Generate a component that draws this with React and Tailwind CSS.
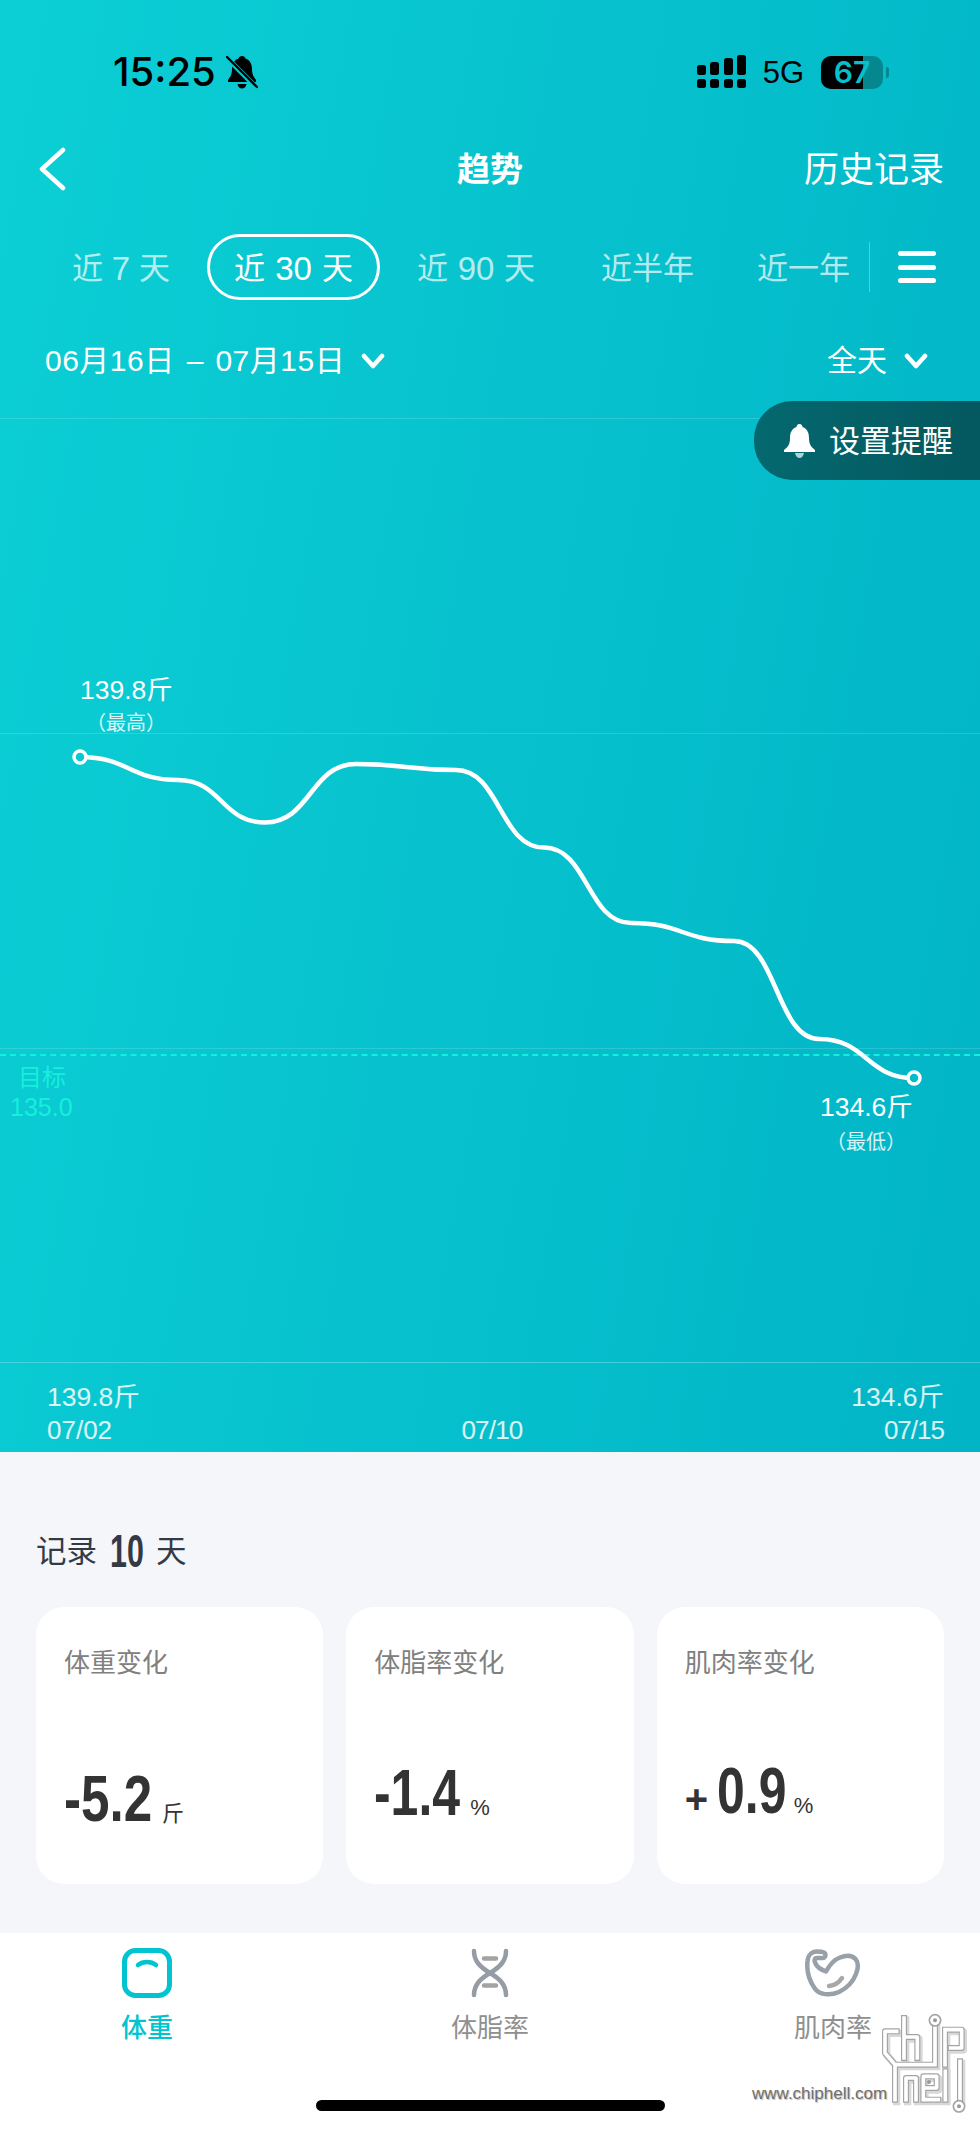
const pts = [
  [80, 757], [178, 780], [265, 822.5], [356, 764], [456, 770], [544, 847.6], [631, 923], [734, 941], [819, 1039], [914, 1078],
].map(([x, y]) => [x, y - 382]);

function smooth(p) {
  let d = `M${p[0][0]} ${p[0][1]}`;
  for (let i = 0; i < p.length - 1; i++) {
    const b = p[i], c = p[i + 1];
    const k = (c[0] - b[0]) * 0.5;
    d += ` C${(b[0] + k).toFixed(1)} ${b[1]} ${(c[0] - k).toFixed(1)} ${c[1]} ${c[0]} ${c[1]}`;
  }
  return d;
}

const Chevron = () => (
  <svg width="24" height="16" viewBox="0 0 24 16" fill="none" stroke="white" strokeWidth="4.5" strokeLinecap="round" strokeLinejoin="round">
    <path d="M3 3 L12 13 L21 3" />
  </svg>
);

function Chip() {
  const d = "M410 305 H375 V370 L405 405 V510 M432 265 V385 M432 322 H472 V385 M405 405 H525 M525 290 V405 M555 300 V405 M555 300 H605 V355 H572 M438 510 V445 H468 V510 M490 510 V440 H530 V475 H490 M490 510 H535 M556 425 V510 M600 395 V510";
  return (
    <svg className="absolute left-[880px] top-[2013px]" width="90" height="104" viewBox="360 250 270 312" fill="none" strokeLinecap="square" strokeLinejoin="round">
      <path d={d} stroke="#8f8f8f" strokeOpacity="0.35" strokeWidth="22" transform="translate(5 6)" />
      <path d={d} stroke="#a4a4a4" strokeWidth="18" />
      <path d={d} stroke="#ffffff" strokeWidth="11" />
      <circle cx="525" cy="272" r="17" fill="#fff" stroke="#a4a4a4" strokeWidth="5" />
      <circle cx="525" cy="272" r="6" fill="#999" />
      <circle cx="597" cy="530" r="17" fill="#fff" stroke="#a4a4a4" strokeWidth="5" />
      <circle cx="597" cy="530" r="6" fill="#999" />
      <circle cx="507" cy="457" r="6" fill="#999" />
    </svg>
  );
}

const cards = [
  { label: "体重变化", value: "-5.2", w: "w-[98px]", scale: "scale-x-[0.8]", unit: "斤", pb: "pb-[59px]" },
  { label: "体脂率变化", value: "-1.4", w: "w-[96px]", scale: "scale-x-[0.78]", unit: "%", pb: "pb-[65px]" },
  { label: "肌肉率变化", value: "0.9", plus: true, w: "w-[77px]", scale: "scale-x-[0.78]", unit: "%", pb: "pb-[65px]" },
];

export default function App() {
  return (
    <div className="relative w-[980px] h-[2129px] overflow-hidden bg-white [font-family:'Liberation_Sans','Noto_Sans_CJK_SC',sans-serif]">
      <div className="h-[1452px] flex flex-col bg-[linear-gradient(100deg,#0ccfd5,#01b4c6)] text-white">
        {/* status bar */}
        <div className="h-[145px] flex items-center justify-between pl-[113px] pr-[91px] pb-[1px] text-black">
          <div className="flex items-center gap-[10px]">
            <span className="text-[40px] leading-none font-medium [font-family:Inter,sans-serif]">15:25</span>
            <svg width="32" height="34" viewBox="0 0 32 34">
              <path fill="black" d="M16 1 C18 1 19 2 19.5 3.5 C24 5 26 9 26 14 C26 20 28 22 30 25 V27 H2 V25 C4 22 6 20 6 14 C6 9 8 5 12.5 3.5 C13 2 14 1 16 1 Z M11.5 29 H20.5 C20 32 18 33.5 16 33.5 C14 33.5 12 32 11.5 29 Z" />
              <path d="M1 3 L31 33" stroke="#0ac8d2" strokeWidth="5" />
              <path d="M1 2 L31 32" stroke="black" strokeWidth="2.4" strokeLinecap="round" />
            </svg>
          </div>
          <div className="flex items-center">
            <svg width="50" height="34" viewBox="0 0 50 34" fill="black">
              <rect x="0" y="24" width="9" height="9" rx="2.5" /><rect x="13" y="24" width="9" height="9" rx="2.5" /><rect x="27" y="24" width="9" height="9" rx="2.5" /><rect x="40" y="24" width="9" height="9" rx="2.5" />
              <rect x="0" y="10" width="9" height="10" rx="2.5" /><rect x="13" y="7" width="9" height="13" rx="2.5" /><rect x="27" y="3" width="9" height="17" rx="2.5" /><rect x="40" y="0" width="9" height="20" rx="2.5" />
            </svg>
            <span className="ml-[16px] text-[31px] leading-none">5G</span>
            <div className="relative ml-[17px] w-[62px] h-[33px] rounded-[10px] overflow-hidden bg-[#04878f]">
              <div className="h-full w-[42px] bg-black" />
              <span className="absolute inset-0 flex items-center justify-center text-[30px] leading-none font-semibold text-[#08c0cd] [font-family:Inter,sans-serif]">67</span>
            </div>
            <div className="ml-[3px] w-[3px] h-[11px] rounded-r-full bg-[#04878f]" />
          </div>
        </div>

        {/* nav */}
        <div className="h-[48px] relative flex items-center justify-between pl-[38px] pr-[36px]">
          <svg width="28" height="44" viewBox="0 0 28 44" fill="none" stroke="white" strokeWidth="4.5" strokeLinecap="round" strokeLinejoin="round">
            <path d="M25 3 L4 22 L25 41" />
          </svg>
          <span className="absolute left-0 right-0 text-center text-[33px] leading-none font-bold">趋势</span>
          <span className="text-[35px] leading-none">历史记录</span>
        </div>

        {/* range tabs */}
        <div className="mt-[41px] h-[66px] flex items-center pl-[72px] text-[31px] leading-none">
          <span className="w-[98px] pt-[2px] flex items-center justify-between text-white/70"><span>近</span><span className="text-[33px]">7</span><span>天</span></span>
          <span className="ml-[37px] w-[173px] h-[66px] pt-[2px] rounded-[33px] border-[3px] border-white flex items-center justify-between px-[24px]"><span>近</span><span className="text-[33px]">30</span><span>天</span></span>
          <span className="ml-[37px] w-[118px] pt-[2px] flex items-center justify-between text-white/70"><span>近</span><span className="text-[33px]">90</span><span>天</span></span>
          <span className="ml-[66px] pt-[2px] text-white/70">近半年</span>
          <span className="ml-[63px] pt-[2px] text-white/70">近一年</span>
          <span className="ml-[19px] w-px h-[50px] bg-white/30" />
          <span className="ml-[28px] w-[38px] h-[32px] flex flex-col justify-between">
            <span className="h-[5px] rounded-full bg-white" />
            <span className="h-[5px] rounded-full bg-white" />
            <span className="h-[5px] rounded-full bg-white" />
          </span>
        </div>

        {/* date */}
        <div className="mt-[40px] h-[42px] flex items-center pl-[45px] pr-[52px] text-[30px] leading-none">
          <span className="tracking-[0.5px]">06月16日</span>
          <span className="ml-[12px]">–</span>
          <span className="ml-[12px] tracking-[0.5px]">07月15日</span>
          <span className="ml-[16px]"><Chevron /></span>
          <span className="ml-auto">全天</span>
          <span className="ml-[17px]"><Chevron /></span>
        </div>

        {/* chart */}
        <div className="relative h-[980px]">
          <div className="absolute left-0 right-0 top-[36px] h-px bg-white/15" />
          <div className="absolute left-0 right-0 top-[351px] h-px bg-white/15" />
          <div className="absolute left-0 right-0 top-[666px] h-px bg-white/15" />
          <div className="absolute left-0 right-0 top-[672px] border-t-2 border-dashed border-[#16efdc]" />

          <svg className="absolute inset-0" width="980" height="980" viewBox="0 0 980 980" fill="none">
            <path d={smooth(pts)} stroke="white" strokeWidth="4.5" strokeLinecap="round" />
            <circle cx="80" cy="375" r="6" fill="#0ac8d2" stroke="white" strokeWidth="3.5" />
            <circle cx="914" cy="696" r="6" fill="#04bccb" stroke="white" strokeWidth="3.5" />
          </svg>

          <div className="absolute left-[80px] top-[293px] text-[26.5px] leading-[30px]">139.8斤</div>
          <div className="absolute left-[86px] w-[80px] top-[329px] text-center text-[20px] leading-[24px] text-white/85">（最高）</div>
          <div className="absolute left-[820px] top-[710px] text-[26.5px] leading-[30px]">134.6斤</div>
          <div className="absolute left-[826px] w-[80px] top-[748px] text-center text-[20px] leading-[24px] text-white/85">（最低）</div>
          <div className="absolute left-[18px] top-[682px] text-[24px] leading-[28px] text-[#16efdc]">目标</div>
          <div className="absolute left-[10px] top-[711px] text-[25px] leading-[28px] text-[#16efdc]">135.0</div>

          <div className="absolute right-0 top-[19px] w-[226px] h-[79px] rounded-l-[38px] bg-[linear-gradient(90deg,#05686f,#04585f)] flex items-center pl-[29px]">
            <svg width="33" height="34" viewBox="0 0 33 34" fill="white">
              <path d="M16.5 0 C18.5 0 19.5 1.5 19.5 3 C24.5 5 26 9 26 14 C26 20 28 23 32 26 V28 H1 V26 C5 23 7 20 7 14 C7 9 8.5 5 13.5 3 C13.5 1.5 14.5 0 16.5 0 Z" />
              <path fillOpacity="0.7" d="M12 29 H21 C20.5 32 18.5 34 16.5 34 C14.5 34 12.5 32 12 29 Z" />
            </svg>
            <span className="ml-[13px] pt-[2px] text-[31px] leading-none">设置提醒</span>
          </div>
        </div>

        {/* axis */}
        <div className="border-t border-white/25 flex-1 pl-[47px] pr-[36px] pt-[19px] text-[26px] text-white/85">
          <div className="flex justify-between text-[26.5px] leading-[30px]">
            <span>139.8斤</span><span>134.6斤</span>
          </div>
          <div className="flex justify-between mt-[4px] leading-[28px]">
            <span>07/02</span>
            <span className="pr-[12px] tracking-[-0.8px]">07/10</span>
            <span className="tracking-[-1px]">07/15</span>
          </div>
        </div>
      </div>

      {/* summary */}
      <div className="h-[481px] bg-[#f4f6fa] px-[36px] pt-[77px] flex flex-col">
        <div className="h-[44px] flex items-center text-[30.5px] leading-none text-[#333a45]">
          <span>记录</span>
          <span className="ml-[13px] w-[33px] inline-block origin-left scale-x-[0.66] text-[46px] font-bold">10</span>
          <span className="ml-[13px]">天</span>
        </div>
        <div className="mt-[34px] grid grid-cols-3 gap-[23px] h-[277px]">
          {cards.map((c) => (
            <div key={c.label} className={`rounded-[28px] bg-white pl-[28px] pt-[38px] flex flex-col justify-between ${c.pb}`}>
              <div className="text-[26px] leading-[36px] text-[#808080]">{c.label}</div>
              <div className="flex items-baseline text-[#333333]">
                {c.plus && <span className="text-[40px] leading-none font-bold w-[32px]">+</span>}
                <span className={`inline-block ${c.w} origin-left ${c.scale} text-[64px] leading-[48px] font-bold whitespace-nowrap`}>{c.value}</span>
                <span className="leading-none text-[22px]">{c.unit}</span>
              </div>
            </div>
          ))}
        </div>
      </div>

      {/* bottom tabs */}
      <div className="h-[196px] flex flex-col bg-white">
        <div className="flex justify-between px-[97px] pt-[15px]">
          <div className="w-[100px] flex flex-col items-center">
            <svg width="50" height="50" viewBox="0 0 50 50" fill="none" stroke="#00c4cf">
              <rect x="2.5" y="2.5" width="45" height="45" rx="11" strokeWidth="5" />
              <path d="M16 17 C21 13 29 13 34 17" strokeWidth="4.5" strokeLinecap="round" />
            </svg>
            <span className="mt-[13px] text-[26px] leading-[34px] font-medium text-[#00c4cf]">体重</span>
          </div>
          <div className="w-[100px] flex flex-col items-center">
            <svg width="38" height="50" viewBox="0 0 38 50" fill="none" stroke="#959ca6" strokeWidth="4.5" strokeLinecap="round">
              <path d="M3 3 C3 13 9 19 19 25 C29 31 35 37 35 47" />
              <path d="M35 3 C35 13 29 19 19 25 C9 31 3 37 3 47" />
              <path d="M13 10.5 H25 M13 37.5 H25" stroke="#a3a3a3" />
            </svg>
            <span className="mt-[13px] text-[26px] leading-[34px] text-[#8f8f8f]">体脂率</span>
          </div>
          <div className="w-[100px] flex flex-col items-center">
            <svg width="56" height="50" viewBox="0 0 56 48" fill="none" stroke="#98a0a9" strokeWidth="4.5" strokeLinecap="round" strokeLinejoin="round">
              <path d="M18 9 H12 C9.5 9 9 11.5 10.5 14.5 C12 18 17 21 21 22.5 C24 17 28 11 35 8.5 C41 6 47 6 50.5 10 C54 14 53 20 51 25 C48 33 42 39 34 43 C25 47 14 46 9.5 39 C4 31 1.5 21 2.5 12 C3 6 7 2.5 12 2.5 C16 2.5 20.5 3 20.5 5.5 C20.5 7.5 19.5 9 18 9 Z" />
              <path d="M24 37 C29 36.5 34 33.5 37 29" stroke="#a8a8a8" strokeWidth="4.5" />
            </svg>
            <span className="mt-[13px] text-[26px] leading-[34px] text-[#8f8f8f]">肌肉率</span>
          </div>
        </div>
        <div className="mt-auto mb-[18px] mx-auto w-[349px] h-[11px] rounded-full bg-black" />
      </div>

      {/* watermark */}
      <div className="absolute left-[752px] top-[2084px] text-[17px] leading-[20px] text-[#6f6f6f] [text-shadow:1px_1px_1px_#bbbbbb]">www.chiphell.com</div>
      <Chip />
    </div>
  );
}
